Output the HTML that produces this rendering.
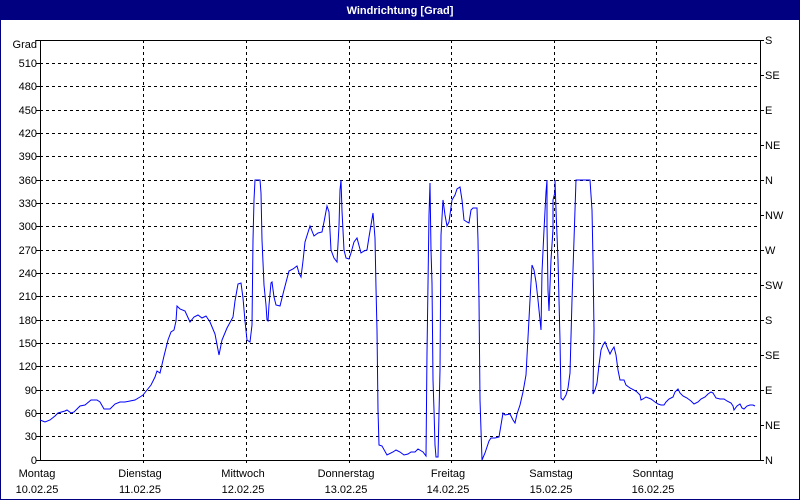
<!DOCTYPE html>
<html><head><meta charset="utf-8"><style>
html,body{margin:0;padding:0;background:#fff;}
svg{display:block;font-family:"Liberation Sans",sans-serif;font-size:11px;}
</style></head><body>
<svg width="800" height="500" viewBox="0 0 800 500" xmlns="http://www.w3.org/2000/svg">
<rect x="0" y="0" width="800" height="500" fill="#fff"/>
<rect x="0" y="0" width="800" height="20" fill="#000080"/>
<rect x="0.5" y="0.5" width="799" height="499" fill="none" stroke="#000080"/>
<text x="400" y="14" fill="#fff" font-weight="bold" text-anchor="middle">Windrichtung [Grad]</text>
<g stroke="#000" stroke-dasharray="3,3" stroke-width="1">
<path d="M40 63.5H758M40 86.5H758M40 110.5H758M40 133.5H758M40 156.5H758M40 180.5H758M40 203.5H758M40 226.5H758M40 250.5H758M40 273.5H758M40 296.5H758M40 320.5H758M40 343.5H758M40 366.5H758M40 390.5H758M40 413.5H758M40 436.5H758"/>
<path d="M143.5 40V464M246.5 40V464M349.5 40V464M451.5 40V464M554.5 40V464M656.5 40V464"/>
</g>
<g stroke="#000" stroke-width="1" fill="none">
<path d="M40.5 40V460.5H760.5V40M36 40.5H760.5"/>
<path d="M36 63.5H40M36 86.5H40M36 110.5H40M36 133.5H40M36 156.5H40M36 180.5H40M36 203.5H40M36 226.5H40M36 250.5H40M36 273.5H40M36 296.5H40M36 320.5H40M36 343.5H40M36 366.5H40M36 390.5H40M36 413.5H40M36 436.5H40M36 460.5H40"/>
<path d="M760 75.5H764M760 110.5H764M760 145.5H764M760 180.5H764M760 215.5H764M760 250.5H764M760 285.5H764M760 320.5H764M760 355.5H764M760 390.5H764M760 425.5H764M760 460.5H764M760 40.5H764"/>
</g>
<g fill="#000" text-anchor="end">
<text x="37" y="48">Grad</text>
<text x="37" y="67">510</text><text x="37" y="90">480</text><text x="37" y="114">450</text><text x="37" y="137">420</text><text x="37" y="160">390</text><text x="37" y="184">360</text><text x="37" y="207">330</text><text x="37" y="230">300</text><text x="37" y="254">270</text><text x="37" y="277">240</text><text x="37" y="300">210</text><text x="37" y="324">180</text><text x="37" y="347">150</text><text x="37" y="370">120</text><text x="37" y="394">90</text><text x="37" y="417">60</text><text x="37" y="440">30</text><text x="37" y="464">0</text>
</g>
<g fill="#000">
<text x="765" y="44">S</text><text x="765" y="79">SE</text><text x="765" y="114">E</text><text x="765" y="149">NE</text><text x="765" y="184">N</text><text x="765" y="219">NW</text><text x="765" y="254">W</text><text x="765" y="289">SW</text><text x="765" y="324">S</text><text x="765" y="359">SE</text><text x="765" y="394">E</text><text x="765" y="429">NE</text><text x="765" y="464">N</text>
</g>
<g fill="#000" text-anchor="middle">
<text x="37" y="477">Montag</text><text x="37" y="493">10.02.25</text>
<text x="140" y="477">Dienstag</text><text x="140" y="493">11.02.25</text>
<text x="243" y="477">Mittwoch</text><text x="243" y="493">12.02.25</text>
<text x="346" y="477">Donnerstag</text><text x="346" y="493">13.02.25</text>
<text x="448" y="477">Freitag</text><text x="448" y="493">14.02.25</text>
<text x="551" y="477">Samstag</text><text x="551" y="493">15.02.25</text>
<text x="653" y="477">Sonntag</text><text x="653" y="493">16.02.25</text>
</g>
<polyline fill="none" stroke="#0000ff" stroke-width="1" points="40,420 45,422 50,420 55,416 58,413 65,411 67,410 71,413 74,412 77,409 80,406 85,405 91,400 97,400 100,402 104,409 110,409 115,404 120,402 125,402 130,401 135,400 140,397 143,395 147,390 151,385 155,377 157,371 160,373 164,356 168,340 171,332 174,330 176,321 177,306 180,309 185,311 190,322 194,317 198,315 202,318 206,316 210,322 215,334 219,355 222,340 227,328 233,317 235,301 238,284 241,283 243,298 245,321 247,340 250,342 252,325 253,240 254,200 255,180 260,180 261,193 262,240 264,285 265,295 266,305 267,320 268,321 269,305 271,283 272,282 274,297 276,305 280,306 284,290 289,271 293,269 297,266 299,273 301,277 303,261 305,242 310,226 314,236 318,233 322,232 324,222 327,206 329,212 331,250 334,258 337,262 338,244 339,226 340,190 341,180 342,211 344,250 346,258 349,259 351,253 354,242 357,238 361,253 364,251 367,250 369,237 371,225 373,213 375,238 376,288 377,330 378,410 379,445 382,446 387,455 393,452 396,450 400,452 404,455 408,454 411,452 415,452 418,449 423,452 426,456 427,353 429,215 430,183 431,250 432,283 433,380 434,410 435,445 436,457 438,457 440,370 441,235 443,200 445,215 447,226 449,222 452,200 455,195 457,189 460,187 462,200 464,220 467,222 469,223 471,210 473,208 477,208 478,240 479,300 480,400 481,430 482,460 485,453 489,441 491,438 495,438 499,437 503,413 505,415 510,414 513,420 515,423 517,414 520,405 523,392 526,375 530,300 532,265 534,270 536,282 538,300 540,320 541,330 542,272 544,230 546,192 547,180 547,225 548,290 549,311 551,260 553,229 553,200 555,192 555,180 556,210 558,260 560,340 561,398 563,400 566,395 568,388 570,373 572,300 574,240 576,180 590,180 592,210 593,260 594,330 593,394 595,390 597,383 599,365 601,350 603,345 605,342 607,347 610,354 612,350 614,347 616,355 618,370 620,380 624,380 626,385 630,388 634,390 637,392 640,395 641,400 643,399 646,397 651,399 655,402 658,404 661,405 664,405 666,402 669,399 673,397 675,392 678,389 680,393 683,396 687,398 691,401 694,404 698,402 701,399 705,397 708,394 711,392 713,393 716,398 720,399 724,399 727,401 731,403 733,406 734,410 737,406 740,404 742,408 744,409 747,406 750,405 753,405 755,406"/>
</svg>
</body></html>
